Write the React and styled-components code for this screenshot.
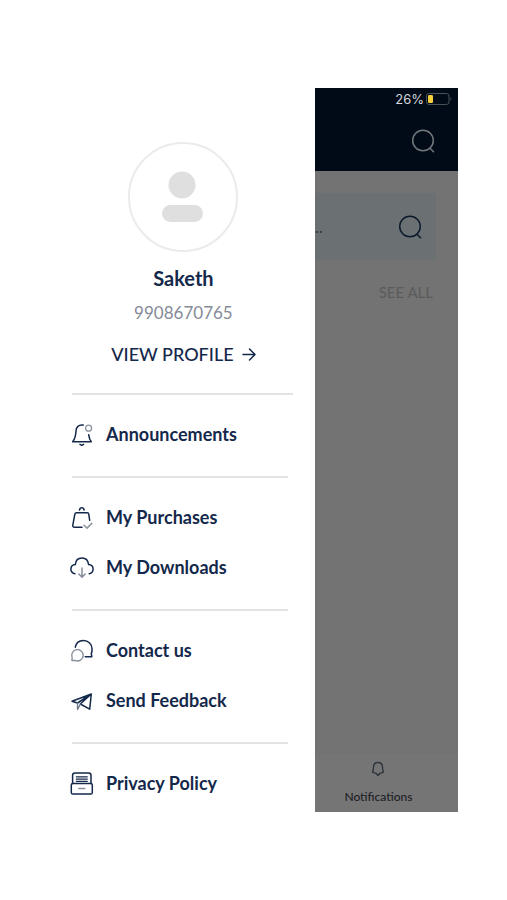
import React from 'react';
import styled, { createGlobalStyle } from 'styled-components';

const GlobalStyle = createGlobalStyle`
  * {
    box-sizing: border-box;
  }
  body {
    margin: 0;
    background: #ffffff;
    font-family: Lato, 'Liberation Sans', sans-serif;
    color: #14284b;
  }
`;

const Page = styled.main`
  padding: 88px 49px;
`;
const Screen = styled.div`
  display: grid;
  grid-template-columns: minmax(0, 65fr) minmax(0, 35fr);
`;

// Drawer
const Drawer = styled.aside`
  padding: 54px 18px 4px 21px;
`;
const Profile = styled.section`
  display: flex;
  flex-direction: column;
  align-items: center;
  padding-bottom: 26px;
`;
const Avatar = styled.div`
  width: 110px;
  height: 110px;
  border: 2px solid #ebebeb;
  border-radius: 50%;
`;
const Name = styled.h1`
  margin: 14px 0 0;
  font-size: 20px;
  line-height: 24px;
  font-weight: 700;
`;
const Phone = styled.p`
  margin: 11px 0 0;
  font-size: 17px;
  line-height: 24px;
  color: #858b98;
`;
const ProfileLink = styled.a`
  display: flex;
  align-items: center;
  gap: 8px;
  margin-top: 16px;
  font-size: 18px;
  line-height: 26px;
  font-weight: 500;
  color: #14284b;
  text-decoration: none;
`;
const Divider = styled.hr`
  height: 2px;
  margin: ${({ $wide }) => ($wide ? '0 4px 14px 2px' : '17px 9px 14px 2px')};
  border: 0;
  background: #e3e3e4;
`;
const Menu = styled.ul`
  margin: 0;
  padding: 0;
  list-style: none;
`;
const MenuLink = styled.a`
  display: flex;
  align-items: center;
  gap: 12px;
  height: 50px;
  font-size: 18px;
  font-weight: 700;
  color: #14284b;
  text-decoration: none;
  white-space: nowrap;

  svg {
    flex: none;
    width: 24px;
    height: 24px;
  }
`;

// Dimmed screen behind the drawer
const Backdrop = styled.div`
  display: flex;
  flex-direction: column;
  background: #737373;
`;
const Header = styled.header`
  height: 83px;
  padding: 2px 6px 0 0;
  background: #010b17;
`;
const StatusBar = styled.div`
  display: flex;
  justify-content: flex-end;
  align-items: center;
  gap: 2px;
  height: 18px;
  font-family: Inter, sans-serif;
  font-size: 13px;
  color: #d5d8dc;
`;
const IconButton = styled.button`
  display: block;
  flex: none;
  padding: 0;
  border: 0;
  background: none;
  color: ${({ $color }) => $color};

  svg {
    display: block;
  }
`;
const HeaderActions = styled.div`
  display: flex;
  justify-content: flex-end;
  padding: 21px 17px 0 0;
`;
const SearchBar = styled.form`
  display: flex;
  align-items: center;
  justify-content: space-between;
  height: 67px;
  margin: 22px 22px 0 0;
  padding-right: 14px;
  border-radius: 0 3px 3px 0;
  background: #6b7073;
`;
const SearchInput = styled.input`
  flex: 1;
  min-width: 0;
  padding: 0;
  border: 0;
  outline: 0;
  background: none;
  font-family: inherit;
  font-size: 17px;

  &::placeholder {
    color: #303b47;
    opacity: 1;
  }
`;
const SeeAll = styled.a`
  align-self: flex-end;
  margin: 22px 25px 0 0;
  font-size: 15px;
  line-height: 20px;
  color: #5a5b5d;
  text-decoration: none;
`;
const TabBar = styled.nav`
  display: flex;
  justify-content: center;
  margin-top: auto;
  padding: 7px 16px 7px 0;
  background: #757575;
`;
const Tab = styled.a`
  display: flex;
  flex-direction: column;
  align-items: center;
  gap: 12px;
  font-size: 12px;
  line-height: 16px;
  font-weight: 500;
  color: #202226;
  text-decoration: none;
`;

const stroke = {
  fill: 'none',
  stroke: 'currentColor',
  strokeWidth: 1.5,
  strokeLinecap: 'round',
  strokeLinejoin: 'round',
  'aria-hidden': true,
};

function AvatarIcon() {
  return (
    <svg viewBox="0 0 106 106" width="106" height="106" fill="#dfdfdf" aria-hidden="true">
      <circle cx="52" cy="41" r="13.5" />
      <rect x="32" y="61" width="41" height="17" rx="8.5" />
    </svg>
  );
}

function ArrowIcon() {
  return (
    <svg {...stroke} viewBox="0 0 14 14" width="14" height="14">
      <path d="M1 7.5h12M7.5 2L13 7.5 7.5 13" />
    </svg>
  );
}

function SearchIcon() {
  return (
    <svg {...stroke} viewBox="0 0 24 24" width="24" height="24">
      <circle cx="12" cy="11.5" r="10.3" />
      <path d="M18.8 19l3.7 3.7" />
    </svg>
  );
}

function BatteryIcon() {
  return (
    <svg viewBox="0 0 26 12" width="26" height="12" aria-hidden="true">
      <rect x="0.5" y="0.5" width="22.5" height="11" rx="2.5" fill="none" stroke="#4b5157" />
      <rect x="2" y="2" width="5" height="8" rx="1.2" fill="#f5cf3c" />
      <path d="M24.5 4v4c1-.5 1.3-3.2 0-4z" fill="#4b5157" />
    </svg>
  );
}

function BellDotIcon() {
  return (
    <svg {...stroke} viewBox="0 0 24 24">
      <path d="M13.2 3.1C8.5 2.5 6.2 5 6 9c-.2 4.5-.8 7.7-3.3 10.8h18.6c-1.4-1.8-2.2-4-2.6-7" />
      <path d="M10 22.4l1.800 1 1.800-1" />
      <circle cx="18.6" cy="6.2" r="3" stroke="#8d94a2" strokeWidth="1.3" />
    </svg>
  );
}

function BagIcon() {
  return (
    <svg {...stroke} viewBox="0 0 24 24">
      <path d="M12 22.3H4.6c-1.4 0-2-.8-1.8-2.1L4.8 9.300c.2-1 .8-1.500 1.800-1.500h10.500c1 0 1.600.5 1.700 1.500l.9 6" />
      <path d="M9.500 5c.3-1.600 1-2.200 2.300-2.200s2 .6 2.300 2.200" />
      <path d="M14 20.300l3 2.800 4.800-4.700" stroke="#8d94a2" />
    </svg>
  );
}

function CloudIcon() {
  return (
    <svg {...stroke} viewBox="0 0 24 24">
      <path d="M4.8 18.800C2.200 18 .8 16.200.9 14c.1-2.500 1.900-4.200 4.400-4.400C5.600 5.400 8.200 2.900 12 2.900s6.200 2.500 6.600 6.700c2.600.2 4.400 2 4.500 4.400.1 2.300-1.300 4.100-3.800 4.800" />
      <path d="M12 13v9M8.800 19l3.200 3.200 3.200-3.200" stroke="#858c9b" />
    </svg>
  );
}

function ChatIcon() {
  return (
    <svg {...stroke} viewBox="0 0 24 24">
      <path d="M5.300 9.200C6.100 5.200 9.300 2.500 13.400 2.500c5 0 8.700 3.800 8.700 8.400 0 2.200-.3 3.500-.8 4.800l.5 3.100h-6.600" />
      <path d="M13.200 17.300a5.700 5.700 0 0 1-8.300 5l-3 .2.300-3.100a5.700 5.700 0 1 1 11-2.100z" stroke="#858c9b" strokeWidth="1.3" />
    </svg>
  );
}

function PlaneIcon() {
  return (
    <svg {...stroke} viewBox="0 0 24 24">
      <path d="M2 13.300L21.300 6l-1.600 15.200-9.400-5.200L21.300 6 7.500 15z" />
      <path d="M7.500 15v6.500l2.800-5.300" stroke="#6d7688" strokeWidth="1.3" />
    </svg>
  );
}

function DrawerFileIcon() {
  return (
    <svg {...stroke} viewBox="0 0 24 24">
      <path d="M2.600 12.500V4.300c0-1.400.8-2.300 2.200-2.300h14c1.400 0 2.200.9 2.200 2.300v8.200" />
      <rect x="1.300" y="12.500" width="21" height="10.500" rx="1.600" />
      <path d="M6.300 5.800h11M6.300 8.200h11M6.300 10.300h11" strokeWidth="1.2" />
      <path d="M8.800 17.500h6" stroke="#858c9b" strokeWidth="1.3" />
    </svg>
  );
}

function BellIcon() {
  return (
    <svg {...stroke} stroke="#2c333b" strokeWidth="1.3" viewBox="0 0 14 16" width="14" height="16">
      <path d="M1.500 11C2.600 9.500 2.400 8.200 2.500 6 2.600 3.300 4.200 1.500 7 1.500s4.400 1.800 4.500 4.500c.1 2.200-.1 3.500 1 5-1 1-2.800 1-3.500 1.200L7 14.500l-2-2.300C4.200 12 2.500 12 1.500 11z" />
    </svg>
  );
}

const menuGroups = [
  [{ label: 'Announcements', Icon: BellDotIcon }],
  [
    { label: 'My Purchases', Icon: BagIcon },
    { label: 'My Downloads', Icon: CloudIcon },
  ],
  [
    { label: 'Contact us', Icon: ChatIcon },
    { label: 'Send Feedback', Icon: PlaneIcon },
  ],
  [{ label: 'Privacy Policy', Icon: DrawerFileIcon }],
];

export default function App() {
  return (
    <Page>
      <GlobalStyle />
      <Screen>
        <Drawer>
          <Profile>
            <Avatar><AvatarIcon /></Avatar>
            <Name>Saketh</Name>
            <Phone>9908670765</Phone>
            <ProfileLink href="#profile">VIEW PROFILE <ArrowIcon /></ProfileLink>
          </Profile>
          <nav>
            {menuGroups.map((group, index) => (
              <React.Fragment key={group[0].label}>
                <Divider $wide={index === 0} />
                <Menu>
                  {group.map(({ label, Icon }) => (
                    <li key={label}>
                      <MenuLink href="#menu"><Icon />{label}</MenuLink>
                    </li>
                  ))}
                </Menu>
              </React.Fragment>
            ))}
          </nav>
        </Drawer>

        <Backdrop>
          <Header>
            <StatusBar>26% <BatteryIcon /></StatusBar>
            <HeaderActions>
              <IconButton type="button" aria-label="Search" $color="#73777c"><SearchIcon /></IconButton>
            </HeaderActions>
          </Header>
          <SearchBar>
            <SearchInput type="text" aria-label="Search courses" placeholder=".." />
            <IconButton type="submit" aria-label="Submit search" $color="#0d1a2c"><SearchIcon /></IconButton>
          </SearchBar>
          <SeeAll href="#all">SEE ALL</SeeAll>
          <TabBar>
            <Tab href="#notifications"><BellIcon />Notifications</Tab>
          </TabBar>
        </Backdrop>
      </Screen>
    </Page>
  );
}
